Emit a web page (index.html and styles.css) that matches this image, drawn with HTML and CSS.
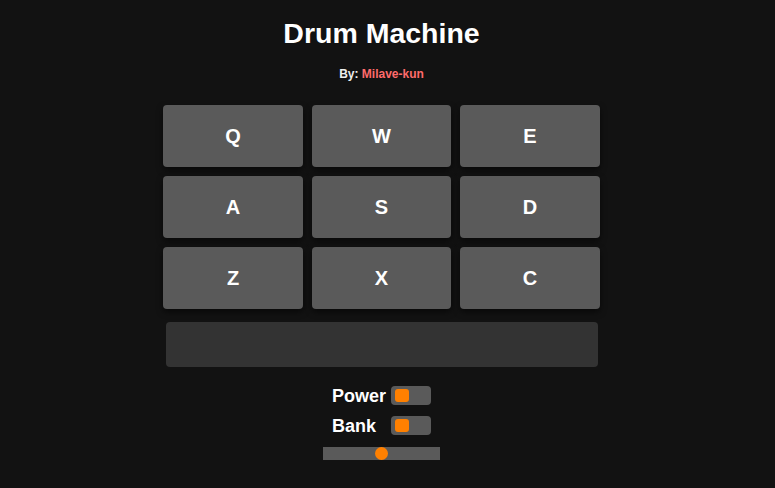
FILE: index.html
```html
<!DOCTYPE html>
<html lang="en">
<head>
<meta charset="utf-8">
<title>Drum Machine</title>
<link rel="stylesheet" href="styles.css">
</head>
<body>
<main class="machine" id="drum-machine">
  <h1 class="title">Drum Machine</h1>
  <p class="byline">By: <span class="author">Milave-kun</span></p>
  <div class="pads">
    <button class="pad">Q</button>
    <button class="pad">W</button>
    <button class="pad">E</button>
    <button class="pad">A</button>
    <button class="pad">S</button>
    <button class="pad">D</button>
    <button class="pad">Z</button>
    <button class="pad">X</button>
    <button class="pad">C</button>
  </div>
  <div class="display" id="display"></div>
  <div class="controls">
    <span class="label">Power</span>
    <div class="toggle"><span class="knob"></span></div>
    <span class="label">Bank</span>
    <div class="toggle"><span class="knob"></span></div>
  </div>
  <div class="volume"><span class="thumb"></span></div>
</main>
</body>
</html>
```
FILE: styles.css
```css
html, body {
  background: #121212;
}
body {
  margin: 0;
  padding: 0 12px 0 0;
  font-family: "Liberation Sans", Arial, sans-serif;
  color: #fff;
}
.machine {
  display: flex;
  flex-direction: column;
  align-items: center;
}
.title {
  margin: 17px 0 0;
  font-size: 28.5px;
  line-height: 33px;
  font-weight: bold;
}
.byline {
  margin: 17px 0 0;
  font-size: 12px;
  line-height: 14px;
  font-weight: bold;
  color: #eee;
}
.author {
  color: #ff6b6b;
}
.pads {
  margin-top: 24px;
  display: grid;
  grid-template-columns: 140px 139px 140px;
  grid-auto-rows: 62px;
  gap: 9px;
}
.pad {
  border: none;
  border-radius: 4px;
  background: #5a5a5a;
  color: #fff;
  font-family: "Liberation Sans", Arial, sans-serif;
  font-size: 20px;
  font-weight: bold;
  box-shadow: 0 3px 6px rgba(0, 0, 0, 0.55);
  padding: 0;
}
.display {
  margin-top: 13px;
  width: 432px;
  height: 45px;
  background: #333;
  border-radius: 4px;
}
.controls {
  margin-top: 19px;
  display: grid;
  grid-template-columns: auto auto;
  grid-auto-rows: 19px;
  column-gap: 5px;
  row-gap: 11px;
  align-items: center;
}
.label {
  font-size: 18px;
  line-height: 20px;
  font-weight: bold;
}
.toggle {
  width: 40px;
  height: 19px;
  background: #5a5a5a;
  border-radius: 4px;
  display: flex;
  align-items: center;
  padding-left: 4px;
  box-sizing: border-box;
}
.knob {
  width: 14px;
  height: 13px;
  background: #ff8000;
  border-radius: 3px;
}
.volume {
  margin-top: 12px;
  width: 117px;
  height: 13px;
  background: #5a5a5a;
  display: flex;
  align-items: center;
  justify-content: center;
}
.thumb {
  width: 13px;
  height: 13px;
  border-radius: 50%;
  background: #ff8000;
}
```
